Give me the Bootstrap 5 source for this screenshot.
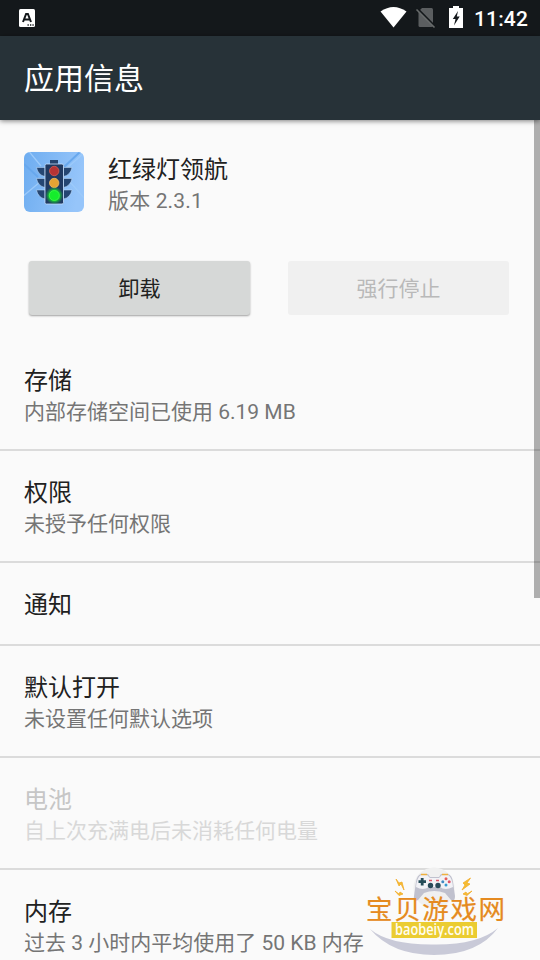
<!DOCTYPE html>
<html lang="zh-CN">
<head>
<meta charset="utf-8">
<meta name="viewport" content="width=device-width, initial-scale=1">
<title>应用信息</title>
<link href="https://cdn.jsdelivr.net/npm/bootstrap@5.3.0/dist/css/bootstrap.min.css" rel="stylesheet">
<style>
body{font-family:Roboto,"Noto Sans CJK SC",sans-serif;background:#fafafa;color:#212121;height:960px}
.status-bar{height:36px;background:#14181b;color:#fff;padding:0 12px 0 18px}
.clock{font-size:21px;font-weight:500;line-height:36px;letter-spacing:.15px;padding-top:1px}
.app-bar{height:84px;background:#273238;color:#fff;box-shadow:0 1px 5px rgba(0,0,0,.5)}
.app-bar h1{font-size:30px;line-height:84px;font-weight:400;padding-top:1px}
.app-head{padding:32px 24px 0;height:140px}
.app-name{padding-top:2px}
.item-title{font-size:24px;line-height:32px;font-weight:400}
.item-sub{font-size:21px;line-height:30px;color:#757575}
.app-version{letter-spacing:.15px}
.actions{padding:0 31px 0 29px;height:79px;gap:38px}
.action-btn{height:54px;margin-top:1px;border:0;border-radius:3px;font-size:21px;padding:4px 0 0;background:#d6d8d7;color:#212121;box-shadow:0 1px 2px rgba(0,0,0,.36)}
.action-btn:disabled{background:#f0f0f0;color:#b9b9b9;box-shadow:none;opacity:1}
.settings .list-group-item{background:transparent;border:0;border-bottom:2px solid #dbdbdb;padding:26px 24px 0;height:112px;color:#212121}
.settings .list-group-item.single{height:83px}
.settings .list-group-item.off{color:#c6c6c6}
.settings .off .item-sub{color:#d8d8d8}
.scroll-thumb{top:120px;right:0;width:6px;height:478px;background:rgba(0,0,0,.3)}
.site-logo{left:360px;top:862px}
</style>
<script src="https://cdn.jsdelivr.net/npm/bootstrap@5.3.0/dist/js/bootstrap.bundle.min.js"></script>
</head>
<body class="position-relative overflow-hidden">
<header>
  <div class="status-bar d-flex align-items-center">
    <svg width="18" height="36" viewBox="0 0 18 36"><rect x="1" y="9" width="16" height="18" rx="1.5" fill="#fff"/><path d="M5 22 8.1 14h1.8L13 22M6.5 19.5h5" fill="none" stroke="#14181b" stroke-width="2"/><path d="M9.5 25h1.3M12 25h1.3M14.4 25h1.3" stroke="#14181b" stroke-width="1.3"/></svg>
    <svg class="ms-auto" width="94" height="36" viewBox="380 0 94 36">
      <path d="M380.5 11.5Q393.500 2.500 406.500 11.500L393.500 27.600Z" fill="#fff"/>
      <path d="M420.500 9.500 422 8H431.500Q433 8 433 9.500V25.500Q433 27 431.500 27H420Q418.500 27 418.500 25.500V11.500Z" fill="#5b5e60"/>
      <path d="M417.500 8.800 435.500 27" stroke="#14181b" stroke-width="2.300"/><path d="M416.500 9.500 434.500 27.500" stroke="#686b6c" stroke-width="1.600"/>
      <path d="M449 8H453V6H459V8H463V28H449Z" fill="#fff"/><path d="M458 11 452.800 19H455.500L454 25.500 459.700 16.500H456.800Z" fill="#14181b"/>
    </svg>
    <span class="clock">11:42</span>
  </div>
  <div class="app-bar position-relative px-4"><h1 class="m-0">应用信息</h1></div>
</header>
<main>
  <section class="app-head d-flex align-items-start">
    <svg width="60" height="60" viewBox="0 0 60 60">
      <defs>
        <linearGradient id="sky" x1="0" y1="0" x2="1" y2=".2"><stop stop-color="#6eadf0"/><stop offset="1" stop-color="#96c5fa"/></linearGradient>
        <radialGradient id="glow"><stop offset=".5" stop-color="#16e82b"/><stop offset="1" stop-color="#16b53b" stop-opacity="0"/></radialGradient>
        <clipPath id="tile"><rect width="60" height="60" rx="6"/></clipPath>
      </defs>
      <g clip-path="url(#tile)">
        <rect width="60" height="60" fill="url(#sky)"/>
        <path d="M3-3 17 14M62-1 42 17M-2 45 16 30M62 48 46 30" stroke="#9ccafa" stroke-width="1.300"/>
        <path d="M57-1 40 15M0 12 14 25" stroke="#68a8ed" stroke-width="2"/>
        <path d="M26 8h8v4h-8z" fill="#25436d"/>
        <path d="M12.500 15.500H21V24.500Q14 23 12.500 15.500ZM12.500 26.500H21V35.500Q14 34 12.500 26.500ZM12.500 38H21V47Q14 45.500 12.500 38ZM48 15.500H39.500V24.500Q46.500 23 48 15.500ZM48 26.500H39.500V35.500Q46.500 34 48 26.500ZM48 38H39.500V47Q46.500 45.500 48 38Z" fill="#254672" stroke="#c6e0fc" stroke-width=".5"/>
        <rect x="21" y="12" width="18.500" height="40" rx="1.500" fill="#203a62" stroke="#c6e0fc" stroke-width=".8"/>
        <circle cx="30.200" cy="19" r="4.700" fill="#b53335" stroke="#d85c50" stroke-width=".8"/>
        <circle cx="30.200" cy="31" r="4.700" fill="#e5a334" stroke="#f4bd64" stroke-width=".8"/>
        <circle cx="30.300" cy="43.500" r="9" fill="url(#glow)"/><circle cx="30.300" cy="43.500" r="5" fill="#15ed2c" stroke="#46ff4b" stroke-width=".7"/>
      </g>
    </svg>
    <div class="app-name ms-4"><div class="item-title">红绿灯领航</div><div class="item-sub app-version">版本 2.3.1</div></div>
  </section>
  <section class="actions d-flex align-items-start">
    <button type="button" class="btn action-btn flex-fill w-50">卸载</button>
    <button type="button" class="btn action-btn flex-fill w-50" disabled>强行停止</button>
  </section>
  <div class="list-group list-group-flush settings">
    <div class="list-group-item"><div class="item-title">存储</div><div class="item-sub">内部存储空间已使用 6.19 MB</div></div>
    <div class="list-group-item"><div class="item-title">权限</div><div class="item-sub">未授予任何权限</div></div>
    <div class="list-group-item single"><div class="item-title">通知</div></div>
    <div class="list-group-item"><div class="item-title">默认打开</div><div class="item-sub">未设置任何默认选项</div></div>
    <div class="list-group-item off"><div class="item-title">电池</div><div class="item-sub">自上次充满电后未消耗任何电量</div></div>
    <div class="list-group-item"><div class="item-title">内存</div><div class="item-sub">过去 3 小时内平均使用了 50 KB 内存</div></div>
  </div>
</main>
<div class="scroll-thumb position-absolute"></div>
<svg class="site-logo position-absolute" width="150" height="98" viewBox="360 862 150 98">
  <circle cx="434" cy="888" r="20.500" fill="#f0f0f0"/>
  <path d="M370 929Q389 945 434 944.500 478 945 498 928 478 955 434 955 392 955 370 929Z" fill="#c9cad8"/>
  <path d="M421 874H428L430 877H439L441 874H448Q452 875 453 882L455 896Q455 902 451 900L445 893Q434 889 424 893L418 900Q413 902 414 896L416 882Q417 875 421 874Z" fill="#c0c1ce"/>
  <path d="M421 875H427L430 878H439L442 875H448Q452 877 453 887Q445 891 440 887H429Q423 891 416 887Q417 877 421 875Z" fill="#f2f2f6"/>
  <path d="M421 874.500H427M442 874.500H448" stroke="#efb13f" stroke-width="1.500"/>
  <path d="M418.500 881.700H426M422.200 878V885.500" stroke="#254c58" stroke-width="2.800"/>
  <circle cx="430.500" cy="885.500" r="2.700" fill="#294a59"/><circle cx="438" cy="885.500" r="2.700" fill="#294a59"/>
  <path d="M429 880.500h3M436 880.500h3" stroke="#dd5364" stroke-width="1.300"/>
  <circle cx="446" cy="878.700" r="1.500" fill="#e65c5c"/><circle cx="446" cy="885" r="1.500" fill="#379bd0"/><circle cx="442.800" cy="881.800" r="1.500" fill="#4089c2"/><circle cx="449.200" cy="881.800" r="1.500" fill="#df5368"/>
  <path d="M396 879 399 886 401 884 404 890 402 882 399 883ZM395 891 399 894 400 892 403 894 399 895.500ZM470.500 878 463 883 465 885 462 890 470 884 467 883ZM472 891 467 894 466 892 463 894 467 895.500Z" fill="#f5bc31" stroke="#f2ad2c" stroke-width=".8"/>
  <rect x="391.500" y="922" width="85.500" height="16" fill="#ebcc31"/>
  <text x="366" y="918.500" font-family="Noto Sans CJK SC,sans-serif" font-size="26.500" textLength="139" fill="#e58a20" stroke="#e58a20" stroke-width=".2">宝贝游戏网</text>
  <text x="395" y="935" font-family="Open Sans,sans-serif" font-size="15.500" font-weight="600" textLength="79" lengthAdjust="spacingAndGlyphs" fill="#fffdf0">baobeiy.com</text>
</svg>
</body>
</html>
